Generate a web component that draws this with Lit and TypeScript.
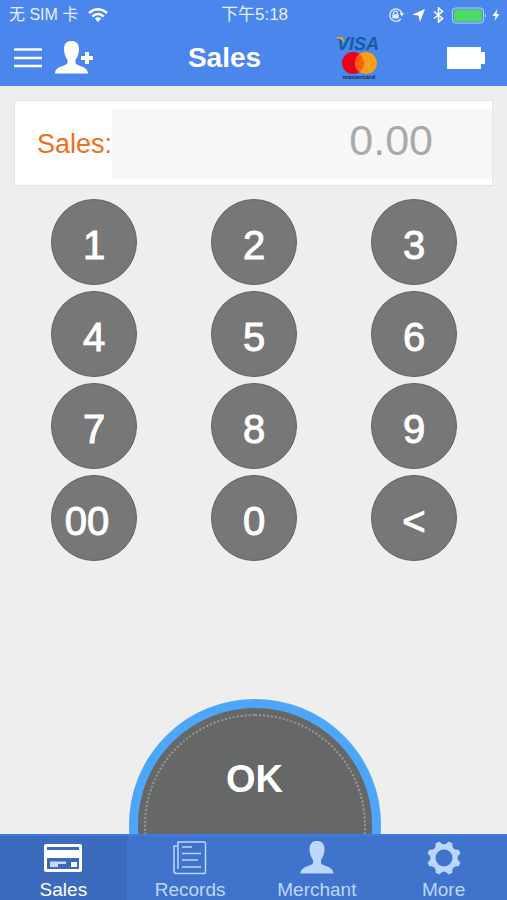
import { LitElement, html, svg, css } from "lit";
import { customElement, state } from "lit/decorators.js";

const personPath =
  "M16.5 0C21 0 24 2.5 24 8C24 12.5 22.5 16 20.5 19V22C21.5 25.5 32.5 24.5 33 32.5H0C.5 24.5 11.5 25.5 12.5 22V19C10.5 16 9 12.5 9 8C9 2.5 12 0 16.5 0Z";

// Eight-toothed cog centred on 17,17.
function gearPath(): string {
  const at = (deg: number, r: number) => {
    const a = (deg * Math.PI) / 180;
    return `${(17 + r * Math.cos(a)).toFixed(2)} ${(17 + r * Math.sin(a)).toFixed(2)}`;
  };
  let d = "";
  for (let i = 0; i < 8; i++) {
    const a = 22.5 + 45 * i;
    d += `${i ? "L" : "M"}${at(a - 7, 17)}L${at(a + 7, 17)}Q${at(a + 22.5, 10.5)} ${at(a + 38, 17)}`;
  }
  return d + "ZM25.5 17A8.5 8.5 0 1 0 8.5 17A8.5 8.5 0 1 0 25.5 17Z";
}

const cardIcon = html`<svg width="38" height="34" viewBox="0 0 38 34" aria-hidden="true">
  <path fill="currentColor" fill-rule="evenodd" d="M2 3H36Q38 3 38 5V29Q38 31 36 31H2Q0 31 0 29V5Q0 3 2 3ZM3 6V9H35V6ZM3 17V28H35V17Z"/>
  <path fill="currentColor" d="M27 21h6v5h-6z"/>
  <path fill="currentColor" opacity=".75" d="M6 20.500h16v2.500h-8v3h-8z"/>
</svg>`;

const recordsIcon = html`<svg width="34" height="34" viewBox="0 0 34 34" fill="none" stroke="currentColor" aria-hidden="true">
  <path stroke-width="1.500" d="M5 28V1H31Q32.500 1 32.500 2.500V31Q32.500 32.500 31 32.500H3.500Q1 32.500 1 30V5H4"/>
  <path stroke-width="1.500" d="M9 6H19M9 12.500H28M9 19H25M9 26H28"/>
</svg>`;

const personIcon = html`<svg width="34" height="34" viewBox="0 0 33 34" aria-hidden="true">
  <path fill="currentColor" d=${personPath}/>
</svg>`;

const gearIcon = html`<svg width="34" height="34" viewBox="0 0 34 34" aria-hidden="true">
  <path fill="currentColor" fill-rule="evenodd" d=${gearPath()}/>
</svg>`;

const tabs = [
  { label: "Sales", icon: cardIcon },
  { label: "Records", icon: recordsIcon },
  { label: "Merchant", icon: personIcon },
  { label: "More", icon: gearIcon },
];

const keys = ["1", "2", "3", "4", "5", "6", "7", "8", "9", "00", "0", "<"];

@customElement("status-bar")
export class StatusBar extends LitElement {
  static styles = css`
    :host {
      display: grid;
      grid-template-columns: 1fr auto 1fr;
      align-items: center;
      height: 30px;
      padding: 0 7px 0 9px;
      font-size: 16px;
      line-height: 20px;
      color: #e6efff;
    }
    .carrier {
      display: flex;
      align-items: center;
      gap: 10px;
    }
    .time {
      font-size: 17px;
    }
    .right {
      display: flex;
      justify-content: flex-end;
      align-items: center;
      gap: 8px;
    }
    .power {
      display: flex;
      align-items: center;
      gap: 5px;
    }
    svg {
      display: block;
    }
  `;

  render() {
    return html`
      <span class="carrier">
        无 SIM 卡
        <svg width="20" height="14" viewBox="0 0 20 14" aria-label="Wi-Fi">
          <g fill="none" stroke="#fff" stroke-width="2.400">
            <path d="M1 5Q10-2.500 19 5"/>
            <path d="M4.300 8.500Q10 3.500 15.700 8.500"/>
          </g>
          <path fill="#fff" d="M6.800 10.600Q10 8 13.200 10.600L10 14Z"/>
        </svg>
      </span>
      <span class="time">下午5:18</span>
      <span class="right">
        <svg width="16" height="16" viewBox="0 0 16 16" aria-label="Rotation lock">
          <path fill="none" stroke="currentColor" stroke-width="1.300" d="M13.800 6A6.200 6.200 0 1 0 12.800 12"/>
          <path fill="currentColor" d="M11.600 6H16L13.800 9.400ZM4.300 7.300H10.700V11.500H4.300Z"/>
          <path fill="none" stroke="currentColor" stroke-width="1.300" d="M5.600 7.500V6A1.900 1.900 0 0 1 9.400 6V7.500"/>
        </svg>
        <svg width="13" height="13" viewBox="0 0 13 13" aria-label="Location">
          <path fill="#fff" d="M13 0L8 13L6.500 6.500L0 5.800Z"/>
        </svg>
        <svg width="11" height="16" viewBox="0 0 11 16" aria-label="Bluetooth">
          <path fill="none" stroke="#fff" stroke-width="1.600" d="M1 4.500L9.500 11.500L5.500 15V1L9.500 4.500L1 11.500"/>
        </svg>
        <span class="power">
          <svg width="35" height="17" viewBox="0 0 35 17" aria-label="Battery">
            <rect x=".5" y="1" width="31" height="15" rx="3" fill="none" stroke="#b9d3ff"/>
            <rect x="2" y="2.500" width="28" height="12" rx="1" fill="#4cd964"/>
            <path fill="#b9d3ff" d="M33 6Q35 8.500 33 11Z"/>
          </svg>
          <svg width="8" height="12" viewBox="0 0 7 12" aria-label="Charging">
            <path fill="#fff" d="M5 0L0 7H3L2 12L7 5H4Z"/>
          </svg>
        </span>
      </span>
    `;
  }
}

@customElement("app-root")
export class AppRoot extends LitElement {
  @state() private cents = "";
  @state() private active = "Sales";

  static styles = css`
    :host {
      display: flex;
      flex-direction: column;
      min-height: 100vh;
      background: #eee;
      font-family: "Liberation Sans", "Noto Sans CJK SC", sans-serif;
    }
    button {
      border: 0;
      padding: 0;
      background: none;
      color: inherit;
      font: inherit;
      cursor: pointer;
    }
    svg {
      display: block;
    }
    .header {
      background: #4a86eb;
      color: #fff;
    }
    .nav {
      display: flex;
      align-items: center;
      height: 56px;
      padding: 0 21px 0 14px;
    }
    .add {
      margin-left: 13px;
    }
    .title {
      flex: 1;
      margin: 0;
      padding-left: 20px;
      text-align: center;
      font-size: 28px;
      line-height: 32px;
      font-weight: bold;
    }
    .brands {
      margin-right: 66px;
    }
    .brand-visa {
      font: italic bold 18px "Liberation Sans", sans-serif;
    }
    .brand-master {
      font: bold 6px "Liberation Sans", sans-serif;
    }
    .amount {
      display: flex;
      align-items: center;
      margin: 14px 14px 13px;
      padding: 8px 0 6px 22px;
      border: 1px solid #e4e4e4;
      background: #fff;
    }
    .amount-label {
      width: 75px;
      color: #ee701e;
      font-size: 27px;
      white-space: nowrap;
    }
    .amount-input {
      flex: 1;
      min-width: 0;
      height: 70px;
      box-sizing: border-box;
      border: 0;
      border-radius: 0;
      outline: 0;
      padding: 0 59px 8px 0;
      background: #f7f7f7;
      color: #777;
      text-align: right;
      font: 43px "Liberation Sans", sans-serif;
    }
    .amount-input::placeholder {
      color: #a9a9a9;
      opacity: 1;
    }
    .keypad {
      display: grid;
      grid-template-columns: repeat(3, 1fr);
      justify-items: center;
      gap: 6px 0;
      margin: 0 13px 0 14px;
    }
    .key {
      width: 86px;
      height: 86px;
      box-sizing: border-box;
      padding-top: 6px;
      border: 1px solid #626262;
      border-radius: 50%;
      background: #777;
      color: #fff;
      font-size: 40px;
      -webkit-text-stroke: 1px #fff;
    }
    .key-wide {
      padding-right: 14px;
    }
    .confirm {
      display: flex;
      justify-content: center;
      align-items: flex-start;
      height: 135px;
      margin-top: auto;
      padding-left: 2px;
      overflow: hidden;
    }
    .ok {
      flex: none;
      width: 252px;
      height: 252px;
      box-sizing: border-box;
      padding: 6px;
      border: 9px solid #4ea6fb;
      border-radius: 50%;
      background: #666767;
      color: #fff;
      font-size: 38px;
      font-weight: bold;
    }
    .ok-face {
      display: block;
      height: 100%;
      box-sizing: border-box;
      padding-top: 41px;
      border: 2px dotted #999;
      border-radius: 50%;
      line-height: 44px;
    }
    .tabs {
      display: grid;
      grid-template-columns: repeat(4, 1fr);
      height: 66px;
      box-sizing: border-box;
      border-top: 2px solid #3d7bdf;
      background: #4073cc;
    }
    .tab {
      display: flex;
      flex-direction: column;
      align-items: center;
      gap: 4px;
      padding-top: 5px;
      color: #bcd6ff;
      font-size: 19px;
      line-height: 22px;
    }
    .tab-active {
      background: #3c6abd;
      color: #fff;
    }
  `;

  private press(key: string) {
    this.cents = key === "<" ? this.cents.slice(0, -1) : (this.cents + key).replace(/^0+/, "").slice(0, 9);
  }

  private get amount() {
    return this.cents ? (Number(this.cents) / 100).toFixed(2) : "";
  }

  render() {
    return html`
      <header class="header">
        <status-bar></status-bar>
        <div class="nav">
          <button class="menu" aria-label="Menu">
            <svg width="28" height="20" viewBox="0 0 28 20">
              <path stroke="#fff" stroke-width="2.500" d="M0 1.500H28M0 10H28M0 18H28"/>
            </svg>
          </button>
          <button class="add" aria-label="Add customer">
            <svg width="39" height="34" viewBox="0 0 39 34">
              <path fill="#fff" d=${personPath}/>
              <path fill="#fff" d="M30 11h4v4h4v4h-4v4h-4v-4h-4v-4h4z"/>
            </svg>
          </button>
          <h1 class="title">Sales</h1>
          <svg class="brands" width="46" height="46" viewBox="0 0 46 46" aria-label="Accepted cards">
            ${svg`
              <text class="brand-visa" x="2" y="15" fill="#135da0">VISA</text>
              <path fill="#e9a53b" d="M1 2H6Q8 2 8.500 4L9.500 8Q7 4 1 2.500Z"/>
              <circle cx="18" cy="28" r="11" fill="#eb001b"/>
              <circle cx="31" cy="28" r="11" fill="#f79e1b"/>
              <path fill="#ff5f00" d="M24.500 19.100A11 11 0 0 1 24.500 36.900A11 11 0 0 1 24.500 19.100Z"/>
              <text class="brand-master" x="24" y="44" text-anchor="middle" fill="#1f2a44">mastercard</text>
            `}
          </svg>
          <svg width="39" height="22" viewBox="0 0 39 22" aria-label="Reader battery">
            <path fill="#fff" d="M0 0H34V5H38V17H34V22H0Z"/>
          </svg>
        </div>
      </header>
      <div class="amount">
        <label class="amount-label" for="amount">Sales:</label>
        <input class="amount-input" id="amount" inputmode="decimal" placeholder="0.00" readonly .value=${this.amount} />
      </div>
      <div class="keypad">
        ${keys.map(
          (k) => html`<button
            class="key ${k.length > 1 ? "key-wide" : ""}"
            @click=${() => this.press(k)}
          >${k}</button>`
        )}
      </div>
      <div class="confirm">
        <button class="ok"><span class="ok-face">OK</span></button>
      </div>
      <nav class="tabs">
        ${tabs.map(
          (t) => html`<button
            class="tab ${t.label === this.active ? "tab-active" : ""}"
            @click=${() => (this.active = t.label)}
          >${t.icon}<span>${t.label}</span></button>`
        )}
      </nav>
    `;
  }
}
